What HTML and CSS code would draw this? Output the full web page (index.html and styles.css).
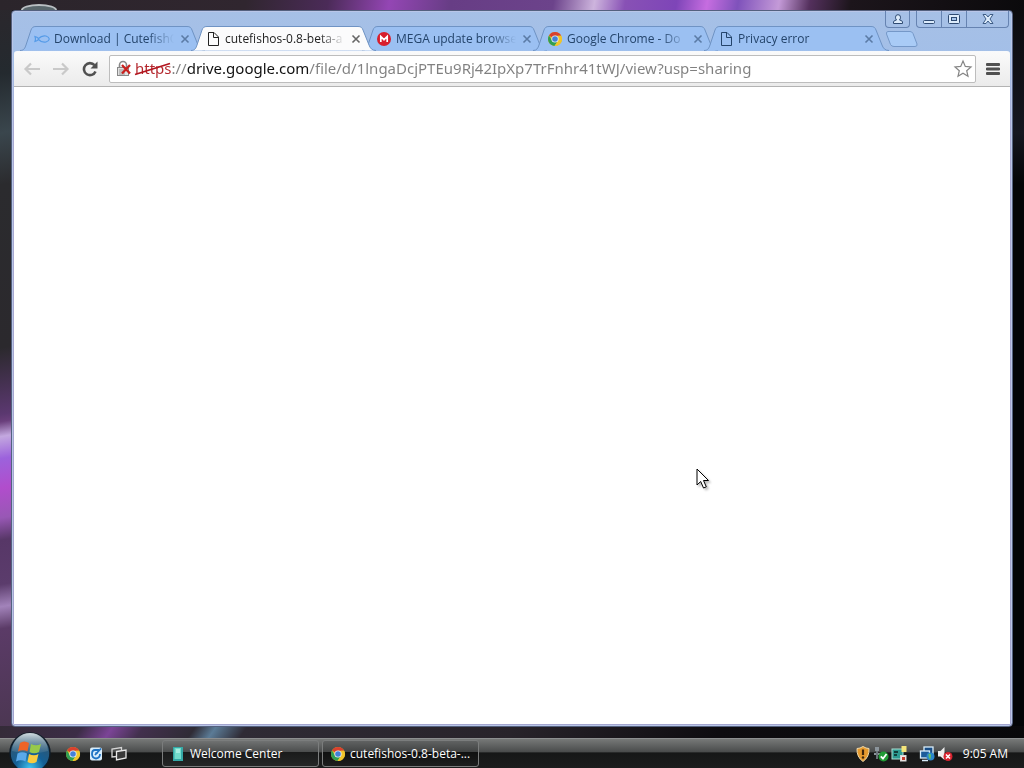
FILE: index.html
```html
<!DOCTYPE html>
<html lang="en">
<head>
  <meta charset="UTF-8" />
  <meta name="viewport" content="width=device-width, initial-scale=1.0" />
  <title>cutefishos-0.8-beta - Google Chrome</title>
  <link rel="stylesheet" href="styles.css">
</head>
<body>
  <!-- shared shapes -->
  <svg class="defs" aria-hidden="true">
    <symbol id="tab-shape" viewBox="0 0 185 25" preserveAspectRatio="none">
      <path d="M0 24.500C4 24.500 5 22 6 19L11 4C12 1.500 13 .5 16 .5H167C170 .5 171 1.500 172 4L178 19C179 22 181 24.500 185 24.500"/>
    </symbol>
    <symbol id="x" viewBox="0 0 10 10">
      <path d="M1.500 1.500L8.500 8.500M8.500 1.500L1.500 8.500" fill="none" stroke="currentColor" stroke-width="1.600"/>
    </symbol>
    <symbol id="page" viewBox="0 0 16 16">
      <path d="M3.500 1.500H9L13.500 6V14.500H3.500ZM8.500 1.500V6.500H13.500" fill="none" stroke="currentColor"/>
    </symbol>
    <symbol id="chrome" viewBox="0 0 16 16">
      <circle cx="8" cy="8" r="7" fill="#e0b923"/>
      <path d="M8 8L2 4.500A7 7 0 0 1 14.200 4.700H8Z" fill="#d9402f"/>
      <path d="M2 4.500A7 7 0 0 0 7.500 15L11 9.700L8 8L5 9.500Z" fill="#2f9e54"/>
      <path d="M14.200 4.700A7 7 0 0 1 7.500 15L11 9.700L11 4.700Z" fill="#f0c52c"/>
      <circle cx="8" cy="8" r="3.600" fill="#e8f0f8"/>
      <circle cx="8" cy="8" r="2.800" fill="#4480d8"/>
    </symbol>
  </svg>

  <main class="desktop">
    <div class="gadget"></div>
    <section class="window">
      <div class="titlebar">
        <button class="caption user" aria-label="User">
          <svg width="12" height="12" viewBox="0 0 12 12"><path d="M1.500 10.500V9Q1.500 7.500 4.500 7Q3.500 6 3.500 4.200A2.500 2.500 0 0 1 8.500 4.200Q8.500 6 7.500 7Q10.500 7.500 10.500 9V10.500Z" fill="#dcebfb" stroke="#2e4a72"/></svg>
        </button>
        <div class="caption-group">
          <button class="caption" aria-label="Minimize">
            <svg width="14" height="12" viewBox="0 0 14 12"><rect x="1.500" y="7.500" width="11" height="3" rx="1" fill="#dcebfb" stroke="#2e4a72"/></svg>
          </button>
          <button class="caption" aria-label="Maximize">
            <svg width="14" height="12" viewBox="0 0 14 12"><rect x="1.500" y="1.500" width="11" height="9" rx="1" fill="#dcebfb" stroke="#2e4a72"/><rect x="4.500" y="4.500" width="5" height="3" fill="#a7c5ec" stroke="#2e4a72"/></svg>
          </button>
          <button class="caption close" aria-label="Close">
            <svg width="14" height="12" viewBox="0 0 14 12"><path d="M2 1.500H5L7 4L9 1.500H12L9 6L12 10.500H9L7 8L5 10.500H2L5 6Z" fill="#dcebfb" stroke="#3d5c86"/></svg>
          </button>
        </div>
      </div>

      <nav class="tabs">
        <div class="tab">
          <svg class="shape"><use href="#tab-shape"/></svg>
          <svg class="icon" viewBox="0 0 16 16"><path d="M1 5.500Q2 8 1 10.500Q3 10 4.500 8.500Q8 12 12 11Q15 10 15.300 8Q15 6 12 5Q8 4 4.500 7.500Q3 6 1 5.500Z" fill="none" stroke="#559be8" stroke-width="1.200"/></svg>
          <button class="title">Download | CutefishO</button>
          <button class="tab-close" aria-label="Close tab"><svg><use href="#x"/></svg></button>
        </div>
        <div class="tab active">
          <svg class="shape"><use href="#tab-shape"/></svg>
          <svg class="icon"><use href="#page"/></svg>
          <button class="title">cutefishos-0.8-beta-a</button>
          <button class="tab-close" aria-label="Close tab"><svg><use href="#x"/></svg></button>
        </div>
        <div class="tab">
          <svg class="shape"><use href="#tab-shape"/></svg>
          <svg class="icon" viewBox="0 0 16 16"><circle cx="8" cy="8" r="7" fill="#d81e2c"/><path d="M4.800 11V5.500L8 8.700L11.200 5.500V11" fill="none" stroke="#fff" stroke-width="1.700"/></svg>
          <button class="title">MEGA update browse</button>
          <button class="tab-close" aria-label="Close tab"><svg><use href="#x"/></svg></button>
        </div>
        <div class="tab">
          <svg class="shape"><use href="#tab-shape"/></svg>
          <svg class="icon"><use href="#chrome"/></svg>
          <button class="title">Google Chrome - Do</button>
          <button class="tab-close" aria-label="Close tab"><svg><use href="#x"/></svg></button>
        </div>
        <div class="tab">
          <svg class="shape"><use href="#tab-shape"/></svg>
          <svg class="icon"><use href="#page"/></svg>
          <button class="title">Privacy error</button>
          <button class="tab-close" aria-label="Close tab"><svg><use href="#x"/></svg></button>
        </div>
        <button class="new-tab" aria-label="New tab">
          <svg width="33" height="17" viewBox="0 0 33 17"><path d="M3 .5H25Q27 .5 28 2.500L32 13Q32.500 15.500 30 15.500H9Q6.500 15.500 5.500 13.500L1.500 3Q1 .5 3 .5Z" fill="#a9cbf6" stroke="#7598c8"/></svg>
        </button>
      </nav>

      <div class="toolbar">
        <button class="tool" aria-label="Back">
          <svg width="18" height="16" viewBox="0 0 18 16"><path d="M17 8H3M8 2.500L2.500 8L8 13.500" fill="none" stroke="#c9c9c9" stroke-width="2.200"/></svg>
        </button>
        <button class="tool" aria-label="Forward">
          <svg width="18" height="16" viewBox="0 0 18 16"><path d="M1 8H15M10 2.500L15.500 8L10 13.500" fill="none" stroke="#c9c9c9" stroke-width="2.200"/></svg>
        </button>
        <button class="tool" aria-label="Reload">
          <svg width="18" height="16" viewBox="0 0 18 16"><path d="M13.500 4.200A6 6 0 1 0 14.500 10.500" fill="none" stroke="#505050" stroke-width="2.600"/><path d="M16.500 .5V7.500H9.500Z" fill="#505050"/></svg>
        </button>
        <div class="omnibox">
          <svg class="lock" width="16" height="18" viewBox="0 0 16 18">
            <path d="M3.500 8V5A3.500 3.500 0 0 1 10.500 5V8" fill="none" stroke="#888" stroke-width="1.600"/>
            <rect x="1.500" y="7.500" width="11" height="8" fill="#e2e2e2" stroke="#888"/>
            <path d="M3 10H9M3 12H9M3 14H9" stroke="#999"/>
            <path d="M6 5L14 13.500M14 5L6 13.500" stroke="#c9211e" stroke-width="2.300"/>
          </svg>
          <input class="url" type="text" aria-label="Address" spellcheck="false" value="https://drive.google.com/file/d/1lngaDcjPTEu9Rj42IpXp7TrFnhr41tWJ/view?usp=sharing">
          <svg class="strike" width="38" height="14" viewBox="0 0 38 14"><path d="M1 12.500L36 1.500" stroke="#b3161f" stroke-width="1.800"/></svg>
          <button class="star" aria-label="Bookmark">
            <svg width="20" height="20" viewBox="0 0 20 20"><path d="M10 2L12.300 7.400L18 7.900L13.700 11.700L15 17.300L10 14.300L5 17.300L6.300 11.700L2 7.900L7.700 7.400Z" fill="#fff" stroke="#858585" stroke-width="1.200"/></svg>
          </button>
        </div>
        <button class="menu" aria-label="Menu">
          <svg width="14" height="14" viewBox="0 0 14 14"><path d="M1 2.500H13M1 7H13M1 11.500H13" stroke="#505050" stroke-width="2.800" stroke-linecap="round"/></svg>
        </button>
      </div>

      <div class="page">
        <svg class="cursor" width="16" height="24" viewBox="0 0 16 24"><path d="M1 1V17L4.700 13.500L7.500 20L10.300 18.800L7.500 12.500H12.500Z" fill="#fff" stroke="#000"/></svg>
      </div>
    </section>
  </main>

  <footer class="taskbar">
    <button class="start" aria-label="Start">
      <svg width="44" height="44" viewBox="0 0 44 44">
        <defs>
          <radialGradient id="orb" cx="50%" cy="88%" r="80%">
            <stop offset="0" stop-color="#3fc4f2"/>
            <stop offset=".45" stop-color="#155f95"/>
            <stop offset="1" stop-color="#33546b"/>
          </radialGradient>
          <linearGradient id="shine" x2="0" y2="1">
            <stop offset="0" stop-color="#e3edf0" stop-opacity=".9"/>
            <stop offset="1" stop-color="#7795a5" stop-opacity=".2"/>
          </linearGradient>
        </defs>
        <circle cx="22" cy="22" r="20" fill="url(#orb)" stroke="#101d29" stroke-width="1.500"/>
        <path d="M4 20A18 18 0 0 1 40 20Q22 25 4 20Z" fill="url(#shine)"/>
        <path d="M12 12Q16 9 21 12L19.500 20.500Q15 18 10 20.500Z" fill="#ed6427"/>
        <path d="M23 13Q28 15.500 33 13L31 21Q26 23.500 21.500 21Z" fill="#97c94a"/>
        <path d="M9.500 22.500Q14 20 19 22.500L17.500 30.500Q13 28 8 30.500Z" fill="#5aa9ea"/>
        <path d="M21 23Q26 25.500 30.500 23L28.500 31Q24 33.500 19.500 31Z" fill="#fbcb3e"/>
      </svg>
    </button>

    <div class="quick">
      <button aria-label="Google Chrome"><svg width="16" height="16"><use href="#chrome"/></svg></button>
      <button aria-label="Live Messenger">
        <svg width="16" height="16" viewBox="0 0 16 16"><rect x="2" y="1.500" width="12" height="13" rx="2" fill="#d7ecfb"/><path d="M11 4H7Q4 4 4 8T8 12.500Q12 12 12 8M7 9L13 2.500" fill="none" stroke="#1e73c4" stroke-width="1.800"/><path d="M7 7H10" stroke="#1e73c4"/></svg>
      </button>
      <button aria-label="Switch windows">
        <svg width="16" height="16" viewBox="0 0 16 16"><path d="M5.500 10.500L1 11V3L10.500 1.500V4" fill="none" stroke="#d5d5d5" stroke-width="1.300"/><path d="M5.500 5.500L15 4V12L5.500 14Z" fill="#3a3a3a" stroke="#e8e8e8" stroke-width="1.300"/></svg>
      </button>
    </div>

    <div class="tasks">
      <button class="task">
        <svg width="16" height="16" viewBox="0 0 16 16"><path d="M3 1H13V15L3 15Z" fill="#35a9a7"/><path d="M4.500 2H11V13H4.500Z" fill="#72dccb"/><path d="M6 4H10M6 6H10" stroke="#d5fff7"/></svg>
        <span>Welcome Center</span>
      </button>
      <button class="task current">
        <svg width="16" height="16"><use href="#chrome"/></svg>
        <span>cutefishos-0.8-beta-...</span>
      </button>
    </div>

    <div class="tray">
      <svg width="16" height="16" viewBox="0 0 16 16"><path d="M8 .5Q11 2.500 14 2.500Q14.500 11 8 15.500Q1.500 11 2 2.500Q5 2.500 8 .5Z" fill="#e69a2e" stroke="#f0d9a9"/><path d="M8 3.500V9" stroke="#40260a" stroke-width="2.200"/><circle cx="8" cy="11.500" r="1.200" fill="#40260a"/></svg>
      <svg width="16" height="16" viewBox="0 0 16 16"><path d="M2 1H6V5H2ZM1 7H8V9H1Z" fill="#8b949b"/><path d="M4 5V13" stroke="#6a7379" stroke-width="2"/><circle cx="10.500" cy="10.500" r="5" fill="#229b36"/><path d="M7.800 10.300L10 12.700L13.500 8" fill="none" stroke="#fff" stroke-width="1.800"/></svg>
      <svg width="16" height="16" viewBox="0 0 16 16"><rect x="1" y="3" width="11" height="10" fill="#2c9a91" stroke="#a9e0d4"/><path d="M3 6H7M3 9H6" stroke="#103f3c" stroke-width="2"/><rect x="10.500" y="0" width="5" height="6" fill="#f4e47a"/><rect x="9.500" y="9.500" width="5.500" height="5.500" fill="#f3e9e6" stroke="#d7d7d7"/><rect x="11" y="11" width="3" height="3" fill="#c33b2c"/></svg>
      <svg class="network" width="16" height="16" viewBox="0 0 16 16"><rect x="5" y="1" width="9" height="8" fill="#184d86" stroke="#d8edfb" stroke-width="1.300"/><rect x="1.500" y="5" width="9" height="7" fill="#1c5c9a" stroke="#d8edfb" stroke-width="1.300"/><path d="M3 14.500H9" stroke="#d8edfb" stroke-width="1.500"/><circle cx="11.500" cy="10.500" r="4" fill="#2b86cb"/><path d="M9.500 8Q12 7 12 9.500T11 13.500Q9 11 9.500 8Z" fill="#63c169"/></svg>
      <svg width="16" height="16" viewBox="0 0 16 16"><path d="M1 5H3.500L7.500 1V14L3.500 10.500H1Z" fill="#eee"/><circle cx="11" cy="10.500" r="4.500" fill="#d8232f"/><path d="M9 8.500L13 12.500M13 8.500L9 12.500" stroke="#fff" stroke-width="1.500"/></svg>
      <time class="clock">9:05 AM</time>
    </div>
  </footer>
</body>
</html>
```
FILE: styles.css
```css
* {
  box-sizing: border-box;
}

body, html {
  margin: 0;
  height: 100%;
  overflow: hidden;
}

body {
  display: flex;
  flex-direction: column;
  font-family: "Open Sans", "Noto Sans", sans-serif;
  font-size: 12px;
  background: #16131a;
}

button {
  display: flex;
  align-items: center;
  justify-content: center;
  margin: 0;
  padding: 0;
  border: none;
  background: none;
  font: inherit;
  color: inherit;
}

svg {
  display: block;
  flex: none;
}

.defs {
  position: absolute;
  width: 0;
  height: 0;
}

/* wallpaper: streaks of light showing around the window */
.desktop {
  position: relative;
  flex: 1;
  min-height: 0;
  padding: 10px 11px 11px;
  background:
    linear-gradient(100deg, #2b252b 0%, #30262f 24%, #4b2b58 32%, #9446b4 38%, #673d85 44%, #6c438b 54%, #cdb4dd 58%, #8851b5 61%, #7e45b8 66%, #c66de0 69%, #7f52bb 72%, #c49ad8 76%, #54305d 79%, #1c151b 83%, #0b0a0c 100%) top / 100% 10px no-repeat,
    linear-gradient(125deg, #342b38 0%, #3c2c46 8%, #7b4496 11%, #42304d 14%, #2f2b35 19%, #5b7b96 21%, #2f2b35 24%, #28232a 50%, #0e0c10 70%, #08080a 100%) bottom / 100% 12px no-repeat,
    linear-gradient(170deg, #2b272c 0%, #242a2f 10%, #3a464d 18%, #2b2b2e 25%, #2b292d 47%, #5b3870 56%, #6a3f7c 57%, #c3a8df 59%, #9c62dc 62%, #b14dcc 66%, #9858b5 70%, #573767 73%, #5b3c6c 79%, #a283ba 82%, #5b3b67 85%, #4a3650 100%) left / 12px 100% no-repeat,
    linear-gradient(#0b0a0c, #15161f 18%, #030507 25%, #030507) right / 12px 100% no-repeat;
}

.gadget {
  position: absolute;
  left: 21px;
  top: 4px;
  width: 36px;
  height: 12px;
  border: 2px solid #b9bfc2;
  border-radius: 50%;
  background: #59676c;
}

.window {
  position: relative;
  display: flex;
  flex-direction: column;
  height: 100%;
  padding: 0 2px 2px;
  border: 1px solid #54617f;
  border-radius: 4px;
  background: linear-gradient(#a6c0e6, #a3bfe8 50px, #a9a9d2 120px, #a3a5ce);
  box-shadow: inset 0 0 0 1px #b9c6e8;
}

.titlebar {
  display: flex;
  justify-content: flex-end;
  gap: 6px;
  height: 15px;
  padding-right: 1px;
}

.caption-group {
  display: flex;
  height: 17px;
  border: 1px solid #6683b1;
  border-top: none;
  border-radius: 0 0 4px 4px;
}

.caption {
  width: 25px;
  height: 16px;
  border-right: 1px solid #6683b1;
}

.caption.user {
  height: 17px;
  border: 1px solid #6683b1;
  border-top: none;
  border-radius: 0 0 4px 4px;
}

.caption.close {
  width: 41px;
  border-right: none;
}

.tabs {
  display: flex;
  height: 25px;
  padding-left: 6px;
}

.tab {
  position: relative;
  display: flex;
  align-items: center;
  flex: 0 1 185px;
  min-width: 0;
  padding: 0 15px 0 14px;
  color: #24446b;
}

.tab + .tab {
  margin-left: -14px;
}

.shape {
  position: absolute;
  left: 0;
  top: 0;
  width: 100%;
  height: 25px;
  fill: #9bc0f2;
  stroke: #6f93c4;
}

.tab.active {
  z-index: 1;
  color: #222;
}

.active .shape {
  fill: #fbfbfc;
}

.icon {
  position: relative;
  width: 16px;
  height: 16px;
}

.title {
  position: relative;
  display: block;
  flex: 1;
  min-width: 0;
  margin-left: 4px;
  overflow: hidden;
  text-align: left;
  white-space: nowrap;
  -webkit-mask-image: linear-gradient(90deg, #000 94px, transparent 120px);
  mask-image: linear-gradient(90deg, #000 94px, transparent 120px);
}

.tab-close {
  position: relative;
  width: 10px;
  height: 10px;
  color: #5b7ba6;
}

.tab-close svg {
  width: 10px;
  height: 10px;
}

.active .tab-close {
  color: #666;
}

.new-tab {
  height: 17px;
  margin: 5px 0 0 -4px;
}

.toolbar {
  display: flex;
  align-items: center;
  height: 36px;
  padding: 0 10px 0 9px;
  gap: 11px;
  border-top: 1px solid #f7f9fc;
  border-bottom: 1px solid #b3b3b3;
  border-radius: 3px 3px 0 0;
  background: linear-gradient(#fafafa, #ebebeb);
}

.omnibox {
  position: relative;
  display: flex;
  align-items: center;
  flex: 1;
  min-width: 0;
  height: 28px;
  margin: 0 -1px;
  padding: 0 2px 0 6px;
  border: 1px solid #bdbdbd;
  border-radius: 2px;
  background: #fff;
}

/* scheme in red, host in black, the rest greyed out */
.url {
  flex: 1;
  min-width: 0;
  height: 26px;
  margin-left: 3px;
  padding: 0 0 2px;
  border: none;
  outline: none;
  font-family: "Noto Sans", "Open Sans", sans-serif;
  font-size: 15px;
  color: transparent;
  background: linear-gradient(90deg, #b3262c 37px, #808080 37px, #808080 52px, #111 52px, #111 174px, #808080 174px);
  -webkit-background-clip: text;
  background-clip: text;
}

.strike {
  position: absolute;
  left: 24px;
  top: 6px;
}

.menu {
  width: 14px;
  height: 20px;
}

.page {
  position: relative;
  flex: 1;
  background: #fff;
}

.cursor {
  position: absolute;
  left: 682px;
  top: 381px;
  filter: drop-shadow(2px 2px 1px #bbb);
}

.taskbar {
  position: relative;
  display: flex;
  align-items: center;
  height: 30px;
  padding-left: 65px;
  border-top: 1px solid #8d8f90;
  color: #fff;
  background: linear-gradient(#777978, #4a4c4c 44%, #161717 48%, #1c1d1d);
}

.start {
  position: absolute;
  left: 8px;
  top: -8px;
}

.quick {
  display: flex;
  gap: 7px;
}

.tasks {
  display: flex;
  flex: 1;
  min-width: 0;
  gap: 3px;
  margin-left: 35px;
}

.task {
  flex: 0 1 157px;
  justify-content: flex-start;
  min-width: 0;
  height: 27px;
  padding: 0 7px;
  gap: 4px;
  border: 1px solid #7b7d7d;
  border-radius: 3px;
  background: linear-gradient(#707272, #4c4e4e 42%, #1a1b1b 46%, #252727);
  white-space: nowrap;
}

.task.current {
  background: linear-gradient(#606262, #424444 42%, #101111 46%, #1d1e1e);
}

.tray {
  display: flex;
  align-items: center;
  gap: 2px;
  padding-right: 16px;
}

.network {
  margin-left: 10px;
}

.clock {
  margin-left: 8px;
}
```
